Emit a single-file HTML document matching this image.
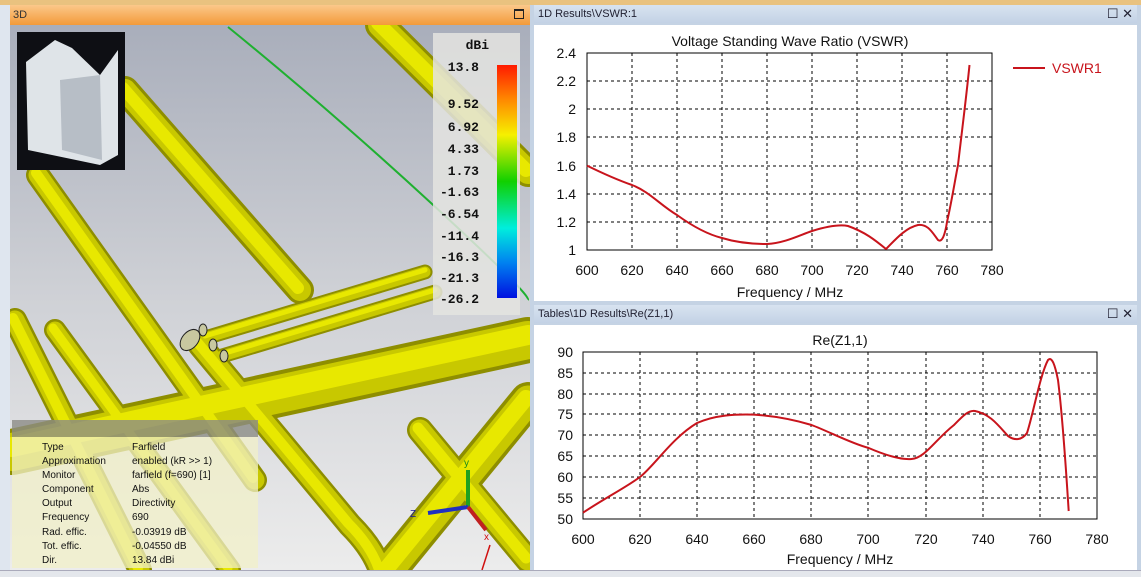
<!DOCTYPE html>
<html><head><meta charset="utf-8"><style>
body{margin:0;width:1141px;height:576px;overflow:hidden;background:#d6dbe3;font-family:"Liberation Sans",sans-serif;position:relative}
.abs{position:absolute}
</style></head><body>
<div class="abs" style="left:0;top:0;width:1141px;height:5px;background:#e9c27f"></div>
<div class="abs" style="left:0;top:5px;width:10px;height:565px;background:#dfe6ef;border-right:1px solid #8aa"></div>
<div class="abs" style="left:10px;top:5px;width:520px;height:20px;background:linear-gradient(#fbc88a,#f39a3a);font-size:11px;color:#333"><span style="position:absolute;left:3px;top:4px">3D</span><span style="position:absolute;right:6px;top:4px;width:8px;height:7px;border:1.5px solid #222;border-top-width:2.5px"></span></div>
<svg class="abs" style="left:10px;top:25px" width="520" height="545" viewBox="10 25 520 545">
<defs><linearGradient id="bg" x1="0" y1="0" x2="0" y2="1"><stop offset="0" stop-color="#a9aebb"/><stop offset="0.5" stop-color="#cfd1d6"/><stop offset="1" stop-color="#ececec"/></linearGradient>
<linearGradient id="cb" x1="0" y1="0" x2="0" y2="1"><stop offset="0" stop-color="#ff1a00"/><stop offset="0.15" stop-color="#ff8a00"/><stop offset="0.3" stop-color="#f6f000"/><stop offset="0.5" stop-color="#10d000"/><stop offset="0.7" stop-color="#00eedd"/><stop offset="0.85" stop-color="#0080f0"/><stop offset="1" stop-color="#0010e0"/></linearGradient></defs>
<rect x="10" y="25" width="520" height="545" fill="url(#bg)"/>
<g fill="none" stroke-linecap="round">
<g id="tubes" stroke="#8e8e00">
<path d="M380 25 L528 172" stroke-width="30"/>
<path d="M125 90 L300 290" stroke-width="28"/>
<path d="M38 175 L255 480" stroke-width="24"/>
<path d="M15 320 L140 570" stroke-width="24"/>
<path d="M55 330 L230 570" stroke-width="22"/>
<path d="M420 430 L528 560" stroke-width="26"/>
<path d="M385 575 L528 400" stroke-width="36"/>
<path d="M12 452 L528 340" stroke-width="46"/>
<path d="M205 338 L425 272" stroke-width="15"/>
<path d="M222 356 L435 292" stroke-width="15"/>
<path d="M200 345 L350 525 Q375 550 382 575" stroke-width="25"/>
</g>
<g stroke="#c8c800">
<path d="M380 25 L528 172" stroke-width="24"/>
<path d="M125 90 L300 290" stroke-width="22"/>
<path d="M38 175 L255 480" stroke-width="19"/>
<path d="M15 320 L140 570" stroke-width="19"/>
<path d="M55 330 L230 570" stroke-width="17"/>
<path d="M420 430 L528 560" stroke-width="21"/>
<path d="M385 575 L528 400" stroke-width="29"/>
<path d="M12 452 L528 340" stroke-width="38"/>
<path d="M205 338 L425 272" stroke-width="11"/>
<path d="M222 356 L435 292" stroke-width="11"/>
<path d="M200 345 L350 525 Q375 550 382 575" stroke-width="20"/>
</g>
<g stroke="#e8e800">
<path d="M378 23 L526 170" stroke-width="14"/>
<path d="M123 88 L298 288" stroke-width="12"/>
<path d="M36 173 L253 478" stroke-width="10"/>
<path d="M13 318 L138 568" stroke-width="10"/>
<path d="M53 328 L228 568" stroke-width="9"/>
<path d="M418 428 L526 558" stroke-width="11"/>
<path d="M383 573 L526 398" stroke-width="16"/>
<path d="M12 447 L528 335" stroke-width="20"/>
<path d="M205 336 L425 270" stroke-width="5"/>
<path d="M222 354 L435 290" stroke-width="5"/>
<path d="M198 343 L348 523 Q373 548 380 573" stroke-width="10"/>
</g>
</g>
<g fill="#c8c8a0" stroke="#222" stroke-width="1">
<ellipse cx="190" cy="340" rx="8" ry="12" transform="rotate(40 190 340)"/>
<ellipse cx="203" cy="330" rx="4" ry="6"/><ellipse cx="213" cy="345" rx="4" ry="6"/><ellipse cx="224" cy="356" rx="4" ry="6"/>
</g>
<path d="M228 27 Q330 110 431 203 T528 300" stroke="#1fb030" stroke-width="2" fill="none"/>
<rect x="17" y="32" width="108" height="138" fill="#0e0f14"/>
<path d="M26 62 L55 40 L72 48 L100 75 L118 50 L118 155 L100 165 L28 150 Z" fill="#dfe4e8"/>
<path d="M60 80 L100 75 L102 160 L62 150 Z" fill="#b7bec6"/>
<rect x="433" y="33" width="87" height="282" fill="#e4e4e0" opacity="0.85"/>
<rect x="497" y="65" width="20" height="233" fill="url(#cb)"/>
<g font-family="Liberation Mono,monospace" font-size="13" font-weight="bold" fill="#111" text-anchor="end">
<text x="489" y="49">dBi</text>
<text x="479" y="71">13.8</text><text x="479" y="108">9.52</text><text x="479" y="131">6.92</text><text x="479" y="153">4.33</text><text x="479" y="175">1.73</text><text x="479" y="196">-1.63</text><text x="479" y="218">-6.54</text><text x="479" y="240">-11.4</text><text x="479" y="261">-16.3</text><text x="479" y="282">-21.3</text><text x="479" y="303">-26.2</text>
</g>
<rect x="12" y="420" width="246" height="17" fill="#8c8c86" opacity="0.8"/>
<rect x="12" y="437" width="246" height="131" fill="#f2f0c8" opacity="0.75"/>
<g font-size="10" fill="#111">
<text x="42" y="450">Type</text><text x="132" y="450">Farfield</text>
<text x="42" y="464">Approximation</text><text x="132" y="464">enabled (kR &gt;&gt; 1)</text>
<text x="42" y="478">Monitor</text><text x="132" y="478">farfield (f=690) [1]</text>
<text x="42" y="492">Component</text><text x="132" y="492">Abs</text>
<text x="42" y="506">Output</text><text x="132" y="506">Directivity</text>
<text x="42" y="520">Frequency</text><text x="132" y="520">690</text>
<text x="42" y="535">Rad. effic.</text><text x="132" y="535">-0.03919 dB</text>
<text x="42" y="549">Tot. effic.</text><text x="132" y="549">-0.04550 dB</text>
<text x="42" y="563">Dir.</text><text x="132" y="563">13.84 dBi</text>
</g>
<path d="M468 507 L468 470" stroke="#20a020" stroke-width="4"/>
<path d="M468 507 L428 513" stroke="#2030c0" stroke-width="4"/>
<path d="M468 507 L486 530" stroke="#c02020" stroke-width="4"/>
<text x="464" y="466" font-size="10" fill="#1a8a1a">y</text>
<text x="410" y="517" font-size="10" fill="#1a1a9a">Z</text>
<text x="484" y="540" font-size="10" fill="#d01010">x</text>
<path d="M490 545 L482 570" stroke="#d01010" stroke-width="1.5"/>
</svg>
<div class="abs" style="left:530px;top:5px;width:611px;height:565px;background:#c5d3e4"></div>
<div class="abs" style="left:534px;top:5px;width:603px;height:18px;background:linear-gradient(#d8e3f0,#c3d2e5);font-size:11px;color:#223"><span style="position:absolute;left:4px;top:3px">1D Results\VSWR:1</span><span style="position:absolute;right:4px;top:1px;font-size:13px">☐ ✕</span></div>
<div class="abs" style="left:534px;top:305px;width:603px;height:18px;background:linear-gradient(#d8e3f0,#c3d2e5);font-size:11px;color:#223"><span style="position:absolute;left:4px;top:3px">Tables\1D Results\Re(Z1,1)</span><span style="position:absolute;right:4px;top:1px;font-size:13px">☐ ✕</span></div>
<svg class="abs" style="left:534px;top:25px" width="603" height="276" viewBox="534 25 603 276">
<rect x="534" y="25" width="603" height="276" fill="#fff"/>
<g stroke="#000" stroke-dasharray="3,3" stroke-width="1">
<path d="M632 53V250M677 53V250M722 53V250M767 53V250M812 53V250M857 53V250M902 53V250M947 53V250M587 222H992M587 194H992M587 166H992M587 137H992M587 109H992M587 81H992"/>
</g>
<rect x="587" y="53" width="405" height="197" fill="none" stroke="#000"/>
<path fill="none" stroke="#c8141c" stroke-width="2" stroke-linejoin="round" d="M587 165.6 C600 172 615 179 632 185 C650 192 660 205 677 215 C695 228 710 235 722 238 C735 242 748 244 767 244 C785 243 800 235 812 231 C825 227 838 224 848 226 C865 232 875 240 886 249 C895 240 905 228 918 225 C928 224 932 232 938 240 C942 243 945 235 947 222 C952 200 955 180 958 165 C962 130 966 100 969.5 65"/>
<g font-size="14" fill="#111">
<text x="790" y="46" text-anchor="middle">Voltage Standing Wave Ratio (VSWR)</text>
<g text-anchor="end"><text x="576" y="58">2.4</text><text x="576" y="86">2.2</text><text x="576" y="114">2</text><text x="576" y="142">1.8</text><text x="576" y="171">1.6</text><text x="576" y="199">1.4</text><text x="576" y="227">1.2</text><text x="576" y="255">1</text></g>
<g text-anchor="middle"><text x="587" y="275">600</text><text x="632" y="275">620</text><text x="677" y="275">640</text><text x="722" y="275">660</text><text x="767" y="275">680</text><text x="812" y="275">700</text><text x="857" y="275">720</text><text x="902" y="275">740</text><text x="947" y="275">760</text><text x="992" y="275">780</text>
<text x="790" y="297">Frequency / MHz</text></g>
<path d="M1013 68H1045" stroke="#c8141c" stroke-width="2"/><text x="1052" y="73" fill="#c8141c">VSWR1</text>
</g>
</svg>
<svg class="abs" style="left:534px;top:325px" width="603" height="245" viewBox="534 325 603 245">
<rect x="534" y="325" width="603" height="245" fill="#fff"/>
<g stroke="#000" stroke-dasharray="3,3" stroke-width="1">
<path d="M640 352V519M697 352V519M754 352V519M811 352V519M868 352V519M926 352V519M983 352V519M1040 352V519M583 498H1097M583 477H1097M583 456H1097M583 435H1097M583 414H1097M583 394H1097M583 373H1097"/>
</g>
<rect x="583" y="352" width="514" height="167" fill="none" stroke="#000"/>
<path fill="none" stroke="#c8141c" stroke-width="2" stroke-linejoin="round" d="M583 512.7 C605 498 625 488 640 477 C655 465 672 438 697 423 C715 415 735 414 754 414.6 C775 416 795 420 811.6 425 C830 432 850 443 868.7 448 C885 455 900 460 911.6 459 C925 458 935 440 954 425 C962 417 968 410 975 411 C990 414 998 425 1008 436 C1015 441 1022 440 1027 433 C1033 415 1040 375 1048 360 C1052 356 1055 365 1058 380 C1063 420 1066 470 1068.7 511"/>
<g font-size="14" fill="#111">
<text x="840" y="345" text-anchor="middle">Re(Z1,1)</text>
<g text-anchor="end"><text x="573" y="357">90</text><text x="573" y="378">85</text><text x="573" y="399">80</text><text x="573" y="419">75</text><text x="573" y="440">70</text><text x="573" y="461">65</text><text x="573" y="482">60</text><text x="573" y="503">55</text><text x="573" y="524">50</text></g>
<g text-anchor="middle"><text x="583" y="544">600</text><text x="640" y="544">620</text><text x="697" y="544">640</text><text x="754" y="544">660</text><text x="811" y="544">680</text><text x="868" y="544">700</text><text x="926" y="544">720</text><text x="983" y="544">740</text><text x="1040" y="544">760</text><text x="1097" y="544">780</text>
<text x="840" y="564">Frequency / MHz</text></g>
</g>
</svg>
<div class="abs" style="left:0;top:570px;width:1141px;height:6px;background:#e4e7ec;border-top:1px solid #aab"></div>
</body></html>
